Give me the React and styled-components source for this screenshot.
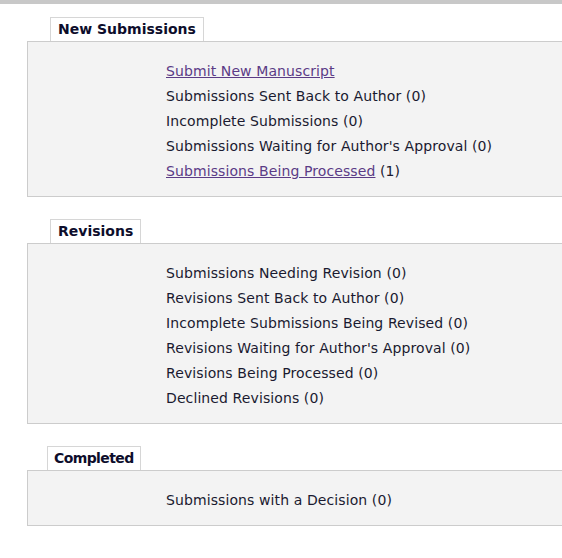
import React from 'react'
import styled, { createGlobalStyle } from 'styled-components'

const GlobalStyle = createGlobalStyle`
  body {
    margin: 0;
    background: #ffffff;
    font-family: "DejaVu Sans", Verdana, sans-serif;
  }
`

const TopBar = styled.div`
  height: 4px;
  background: #c8c8c8;
`

const Page = styled.div`
  padding: 13px 0 0 27px;
  overflow: hidden;
`

const Section = styled.section`
  margin-bottom: 22px;
`

const Tab = styled.div`
  display: inline-block;
  margin-left: ${(p) => (p.$tight ? '20px' : '23px')};
  height: 23px;
  line-height: 23px;
  padding: 0 ${(p) => (p.$tight ? '6px' : '7px')};
  background: #ffffff;
  border: 1px solid #d6d6d6;
  border-bottom: none;
  font-size: 14px;
  letter-spacing: ${(p) => (p.$tight ? '-0.6px' : '0')};
  font-weight: bold;
  color: #0d0d2b;
  vertical-align: top;
`

const Panel = styled.div`
  background: #f3f3f3;
  border: 1px solid #cccccc;
  border-right: none;
  margin-right: -10px;
  padding: 17px 0 12px 138px;
`

const Item = styled.div`
  height: 25px;
  line-height: 25px;
  font-size: 14px;
  letter-spacing: 0.1px;
  color: #1a1a30;
  white-space: nowrap;
`

const Link = styled.a`
  color: #5b3b86;
  text-decoration: underline;
  cursor: pointer;
`

const sections = [
  {
    title: 'New Submissions',
    items: [
      { link: 'Submit New Manuscript' },
      { text: 'Submissions Sent Back to Author (0)' },
      { text: 'Incomplete Submissions (0)' },
      { text: "Submissions Waiting for Author's Approval (0)" },
      { link: 'Submissions Being Processed', text: ' (1)' },
    ],
  },
  {
    title: 'Revisions',
    items: [
      { text: 'Submissions Needing Revision (0)' },
      { text: 'Revisions Sent Back to Author (0)' },
      { text: 'Incomplete Submissions Being Revised (0)' },
      { text: "Revisions Waiting for Author's Approval (0)" },
      { text: 'Revisions Being Processed (0)' },
      { text: 'Declined Revisions (0)' },
    ],
  },
  {
    title: 'Completed',
    tight: true,
    items: [{ text: 'Submissions with a Decision (0)' }],
  },
]

export default function App() {
  return (
    <>
      <GlobalStyle />
      <TopBar />
      <Page>
        {sections.map((s) => (
          <Section key={s.title}>
            <Tab $tight={s.tight}>{s.title}</Tab>
            <Panel>
              {s.items.map((it, i) => (
                <Item key={i}>
                  {it.link && <Link>{it.link}</Link>}
                  {it.text}
                </Item>
              ))}
            </Panel>
          </Section>
        ))}
      </Page>
    </>
  )
}
